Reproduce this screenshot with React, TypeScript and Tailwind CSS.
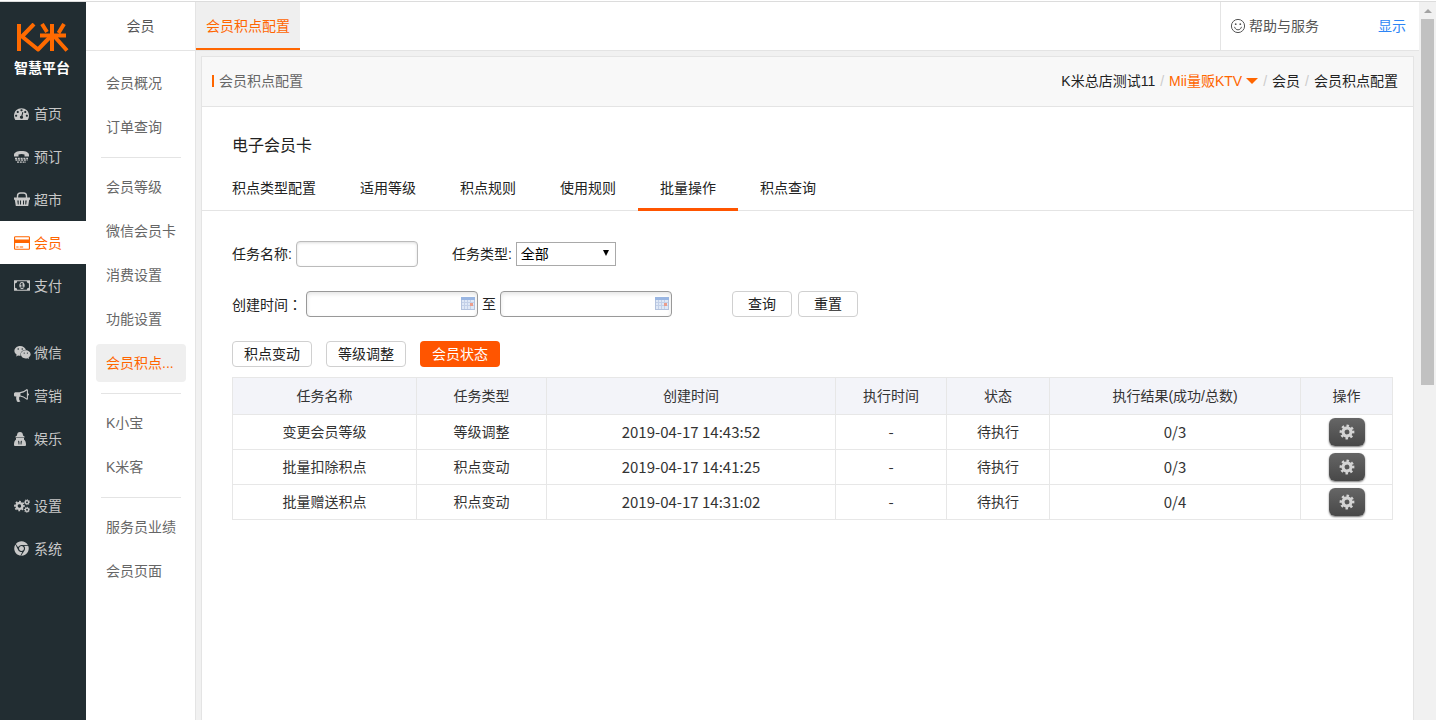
import { useState } from 'react';
import { FaWeixin, FaChrome } from 'react-icons/fa';

function DashboardIcon() {
  return (
    <svg viewBox="0 0 1792 1792" className="w-[15px] h-[15px]" fill="currentColor">
      <path d="M384 1152q0-53-37.5-90.5t-90.5-37.5-90.5 37.5-37.5 90.5 37.5 90.5 90.5 37.5 90.5-37.5 37.5-90.5zm192-448q0-53-37.5-90.5t-90.5-37.5-90.5 37.5-37.5 90.5 37.5 90.5 90.5 37.5 90.5-37.5 37.5-90.5zm428 481l101-382q6-26-7.5-48.5t-38.5-29.5-48 6.5-30 39.5l-101 382q-60 5-107 43.5t-63 98.5q-20 77 20 146t117 89 146-20 89-117q16-60-6-117t-72-91zm660-33q0-53-37.5-90.5t-90.5-37.5-90.5 37.5-37.5 90.5 37.5 90.5 90.5 37.5 90.5-37.5 37.5-90.5zm-640-640q0-53-37.5-90.5t-90.5-37.5-90.5 37.5-37.5 90.5 37.5 90.5 90.5 37.5 90.5-37.5 37.5-90.5zm448 192q0-53-37.5-90.5t-90.5-37.5-90.5 37.5-37.5 90.5 37.5 90.5 90.5 37.5 90.5-37.5 37.5-90.5zm320 448q0 261-141 483-19 29-54 29h-1402q-35 0-54-29-141-221-141-483 0-182 71-348t191-286 286-191 348-71 348 71 286 191 191 286 71 348z" />
    </svg>
  );
}

function PhoneIcon() {
  return (
    <svg viewBox="0 0 15 12" className="w-[15px] h-3" fill="currentColor">
      <path d="M0 5.500V4C0 1.500 3 0 7.500 0S15 1.500 15 4v1.500h-4.500V3.600c-1.800-.7-4.200-.7-6 0v1.900z" />
      <path d="M1 7.500h13M1.500 9.200h12M3 11.200h9" stroke="currentColor" strokeWidth="1.300" strokeDasharray="2 0.800" />
    </svg>
  );
}

function BasketIcon() {
  return (
    <svg viewBox="0 0 16 15" className="w-4 h-[15px]" fill="currentColor">
      <path d="M3.500 6V4Q3.500 1 6.500 1h3q3 0 3 3v2" fill="none" stroke="currentColor" strokeWidth="1.400" />
      <path
        fillRule="evenodd"
        d="M0 5.500h16v2.200h-.8L14.200 14H1.800L.8 7.700H0zM3.300 8.500l.5 4h.9v-4zM6 8.500v4h1v-4zM9 8.500v4h1v-4zM11.300 8.500v4h.9l.5-4z"
      />
    </svg>
  );
}

function CardIcon() {
  return (
    <svg viewBox="0 0 1792 1792" className="w-4 h-4" fill="currentColor">
      <path d="M1632 128q66 0 113 47t47 113v1216q0 66-47 113t-113 47h-1472q-66 0-113-47t-47-113v-1216q0-66 47-113t113-47h1472zm-1472 128q-13 0-22.5 9.5t-9.5 22.5v224h1536v-224q0-13-9.5-22.5t-22.5-9.5h-1472zm1472 1280q13 0 22.5-9.5t9.5-22.5v-608h-1536v608q0 13 9.5 22.5t22.5 9.5h1472zm-1376-128v-128h256v128h-256zm384 0v-128h384v128h-384z" />
    </svg>
  );
}

function MoneyIcon() {
  return (
    <svg viewBox="0 0 1920 1792" className="w-4 h-[15px]" fill="currentColor">
      <path d="M768 1152h384v-96h-128v-448h-114l-148 137 77 80q42-37 55-57h2v288h-128v96zm512-256q0 70-21 142t-59.5 134-101.5 101-138 39-138-39-101.5-101-59.5-134-21-142 21-142 59.5-134 101.5-101 138-39 138 39 101.5 101 59.5 134 21 142zm512 256v-512q-106 0-181-75t-75-181h-1152q0 106-75 181t-181 75v512q106 0 181 75t75 181h1152q0-106 75-181t181-75zm128-832v1152q0 26-19 45t-45 19h-1792q-26 0-45-19t-19-45v-1152q0-26 19-45t45-19h1792q26 0 45 19t19 45z" />
    </svg>
  );
}

function BullhornIcon() {
  return (
    <svg viewBox="0 0 1792 1792" className="w-[15px] h-[15px]" fill="currentColor">
      <path d="M1664 640q53 0 90.5 37.5t37.5 90.5-37.5 90.5-90.5 37.5v384q0 52-38 90t-90 38q-417-347-812-380-58 19-91 66t-31 100.5 40 92.5q-20 33-23 65.5t6 58 33.5 55 48 50 61.5 50.5q-29 58-111.5 83t-168.5 11.5-132-55.5q-7-23-29.5-87.5t-32-94.5-23-89-15-101 3.5-98.5 22-110.5h-122q-66 0-113-47t-47-113v-192q0-66 47-113t113-47h480q435 0 896-384 52 0 90 38t38 90v384zm-128 604v-954q-394 302-768 343v270q377 42 768 341z" />
    </svg>
  );
}

function AgentIcon() {
  return (
    <svg viewBox="0 0 12 14" className="w-3 h-[14px]" fill="currentColor">
      <path d="M3 3.500C3 1 4.200 0 6 0s3 1 3 3.500l1.500 1v1h-9v-1z" />
      <path
        fillRule="evenodd"
        d="M2 6h8v1.500c1.400 1 2 2.800 2 5V13q0 1-1 1H1q-1 0-1-1v-.5c0-2.200.6-4 2-5zM4 8.500l.6 4h.8v-3zM8 8.500l-1.400 1v3h.8z"
      />
    </svg>
  );
}

// Eight teeth: the dash length is 1/16 of the outer circle
function Gear({ cx, cy, scale }: { cx: number; cy: number; scale: number }) {
  return (
    <g
      transform={`translate(${cx} ${cy}) scale(${scale}) rotate(-11.25)`}
      fill="none"
      stroke="currentColor"
    >
      <circle r="4" strokeWidth="3.200" />
      <circle r="6.200" strokeWidth="2.400" strokeDasharray="2.435 2.435" />
    </g>
  );
}

function CogIcon() {
  return (
    <svg viewBox="0 0 16 16" className="w-4 h-4">
      <Gear cx={8} cy={8} scale={1} />
    </svg>
  );
}

function CogsIcon() {
  return (
    <svg viewBox="0 0 16 14" className="w-4 h-[14px]">
      <Gear cx={5.4} cy={7} scale={0.72} />
      <Gear cx={13} cy={3.2} scale={0.4} />
      <Gear cx={13} cy={10.8} scale={0.4} />
    </svg>
  );
}

function SmileIcon() {
  return (
    <svg viewBox="0 0 16 16" className="w-4 h-4" fill="none" stroke="currentColor">
      <circle cx="8" cy="8" r="6.6" />
      <path d="M4.6 9.2c.5 1.7 1.8 2.6 3.4 2.6s2.900-.9 3.400-2.600" strokeLinecap="round" />
      <circle cx="5.700" cy="6.200" r="0.900" fill="currentColor" stroke="none" />
      <circle cx="10.300" cy="6.200" r="0.900" fill="currentColor" stroke="none" />
    </svg>
  );
}

function CalendarIcon() {
  return (
    <svg viewBox="0 0 14 13" className="w-[14px] h-[13px]">
      <rect x="0.500" y="0.500" width="13" height="12" fill="#dfe8f6" stroke="#b4c3de" />
      <rect x="0" y="0" width="14" height="3" fill="#9ab6e2" />
      <path d="M1 5.500h12M1 8.500h12M3.500 3v9M6.500 3v9M9.500 3v9" stroke="#c3d0e8" />
      <rect x="9" y="6" width="3" height="3" fill="#eb9d8b" />
    </svg>
  );
}

function Logo() {
  return (
    <a href="#" className="flex flex-col items-center pt-[21px] pr-[2px] h-[90px]" aria-label="K米智慧平台">
      <svg
        viewBox="0 0 54 30"
        className="w-[54px] h-[30px]"
        fill="none"
        stroke="#ff6a00"
        strokeWidth="4"
      >
        <path d="M4 1v27" />
        <path d="M19 1L7 13.500l16 13L36 13" strokeLinejoin="round" />
        <path d="M25 12.500h26M37 1v27M27 1l5 8M49 1l-5.500 9M39 13l13 14.500" />
      </svg>
      <span className="mt-[7px] text-sm leading-4 font-bold text-white">智慧平台</span>
    </a>
  );
}

const mainMenu = [
  [
    { label: '首页', icon: <DashboardIcon /> },
    { label: '预订', icon: <PhoneIcon /> },
    { label: '超市', icon: <BasketIcon /> },
    { label: '会员', icon: <CardIcon />, active: true },
    { label: '支付', icon: <MoneyIcon /> },
  ],
  [
    { label: '微信', icon: <FaWeixin size={17} /> },
    { label: '营销', icon: <BullhornIcon /> },
    { label: '娱乐', icon: <AgentIcon /> },
  ],
  [
    { label: '设置', icon: <CogsIcon /> },
    { label: '系统', icon: <FaChrome size={15} /> },
  ],
];

const subMenu = [
  ['会员概况', '订单查询'],
  ['会员等级', '微信会员卡', '消费设置', '功能设置', '会员积点...'],
  ['K小宝', 'K米客'],
  ['服务员业绩', '会员页面'],
];

const tabs = ['积点类型配置', '适用等级', '积点规则', '使用规则', '批量操作', '积点查询'];

const rows = [
  { name: '变更会员等级', type: '等级调整', created: '2019-04-17 14:43:52', result: '0/3' },
  { name: '批量扣除积点', type: '积点变动', created: '2019-04-17 14:41:25', result: '0/3' },
  { name: '批量赠送积点', type: '积点变动', created: '2019-04-17 14:31:02', result: '0/4' },
];

const columns = [
  { title: '任务名称', width: 'w-[184px]' },
  { title: '任务类型', width: 'w-[130px]' },
  { title: '创建时间', width: '' },
  { title: '执行时间', width: 'w-[111px]' },
  { title: '状态', width: 'w-[103px]' },
  { title: '执行结果(成功/总数)', width: 'w-[251px]' },
  { title: '操作', width: 'w-[92px]' },
];

const buttonStyle = 'h-[26px] rounded border border-[#d0d0d0] bg-white text-[#222]';
const cellStyle = 'border border-[#e7e7e7] p-0 font-normal';
const numberStyle = "font-['Noto_Sans_CJK_SC',sans-serif] text-[15px] leading-5";

function DateInput({ label }: { label: string }) {
  return (
    <div className="relative">
      <input
        type="text"
        aria-label={label}
        className="block w-[172px] h-[26px] pl-2 pr-6 rounded border border-[#999] shadow-[inset_0_2px_4px_#e4e4e4]"
      />
      <span className="absolute right-[3px] top-[6px]">
        <CalendarIcon />
      </span>
    </div>
  );
}

export default function App() {
  const [activeTab, setActiveTab] = useState('批量操作');

  return (
    <div className="h-screen flex flex-col overflow-hidden bg-white pt-px text-sm text-[#222] font-['Liberation_Sans','Noto_Sans_CJK_SC',sans-serif]">
      <div className="h-px shrink-0 bg-[#dcdcdc]" />
      <div className="flex flex-1 min-h-0">
        {/* Main menu */}
        <aside className="w-[86px] shrink-0 bg-[#222d32] text-[#c8c8c8]">
          <Logo />
          <nav className="flex flex-col gap-6">
            {mainMenu.map((group, i) => (
              <div key={i}>
                {group.map((item) => (
                  <a
                    key={item.label}
                    href="#"
                    className={`flex items-center h-[43px] pl-[14px] ${
                      item.active ? 'bg-white text-[#ff6600]' : ''
                    }`}
                  >
                    <span className="w-5">{item.icon}</span>
                    {item.label}
                  </a>
                ))}
              </div>
            ))}
          </nav>
        </aside>

        <div className="flex flex-col flex-1 min-w-0">
          {/* Top bar */}
          <header className="flex shrink-0 h-[49px] border-b border-[#e4e4e4]">
            <div className="flex items-center justify-center w-[110px] border-r border-[#e4e4e4] text-[#555]">
              会员
            </div>
            <a
              href="#"
              className="flex items-center h-12 px-[10px] pt-[2px] bg-[#efefef] border-b-2 border-[#ff6600] text-[#ff6600]"
            >
              会员积点配置
            </a>
            <div className="flex items-center justify-between ml-auto w-[199px] pl-[9px] pr-[13px] border-l border-[#e4e4e4]">
              <a href="#" className="flex items-center gap-[3px] text-[#555]">
                <SmileIcon />
                帮助与服务
              </a>
              <a href="#" className="text-[#2d85f5]">
                显示
              </a>
            </div>
          </header>

          <div className="flex flex-1 min-h-0">
            {/* Sub menu */}
            <nav className="flex flex-col w-[110px] shrink-0 gap-[6px] pl-[10px] pr-[9px] pt-[13px] border-r border-[#e4e4e4] text-[#666]">
              {subMenu.map((group, i) => (
                <div key={i} className="flex flex-col gap-[6px]">
                  {i > 0 && <hr className="mx-[5px] mt-[5px] mb-1 border-[#e4e4e4]" />}
                  {group.map((label) => (
                    <a
                      key={label}
                      href="#"
                      className={`block h-[38px] pl-[10px] leading-[38px] rounded-sm whitespace-nowrap ${
                        label === '会员积点...' ? 'bg-[#efefef] text-[#ff6600]' : ''
                      }`}
                    >
                      {label}
                    </a>
                  ))}
                </div>
              ))}
            </nav>

            {/* Page */}
            <main className="flex flex-1 min-w-0 bg-[#f1f1f1] pt-[5px] px-[5px]">
              <section className="flex-1 min-w-0 bg-white border border-b-0 border-[#e4e4e4]">
                <div className="flex items-center justify-between h-[50px] px-[10px] pb-[2px] border-b border-[#e4e4e4] bg-[#f8f8f8]">
                  <h1 className="flex items-center gap-[5px] text-[#666]">
                    <span className="w-[2px] h-3 bg-[#ff6600]" />
                    会员积点配置
                  </h1>
                  <div className="flex items-center gap-[5px] pr-[5px]">
                    <a href="#">K米总店测试11</a>
                    <span className="text-[#ccc]">/</span>
                    <a href="#" className="flex items-center gap-1 text-[#ff6600]">
                      Mii量贩KTV
                      <svg viewBox="0 0 12 6" className="w-3 h-[6px]" fill="currentColor">
                        <path d="M0 0h12L6 6z" />
                      </svg>
                    </a>
                    <span className="text-[#ccc]">/</span>
                    <a href="#">会员</a>
                    <span className="text-[#ccc]">/</span>
                    <span>会员积点配置</span>
                  </div>
                </div>

                <h2 className="px-[30px] pt-[27px] text-base leading-6">电子会员卡</h2>
                <div className="flex mt-[9px] pl-2 border-b border-[#e4e4e4]">
                  {tabs.map((tab) => (
                    <button
                      key={tab}
                      type="button"
                      onClick={() => setActiveTab(tab)}
                      className={`h-11 -mb-px pt-px px-[22px] border-b-3 ${
                        tab === activeTab ? 'border-[#ff5500]' : 'border-transparent'
                      }`}
                    >
                      {tab}
                    </button>
                  ))}
                </div>

                <form className="px-[30px] pt-[30px]">
                  <div className="flex items-center">
                    <label htmlFor="taskName" className="mr-1">
                      任务名称:
                    </label>
                    <input
                      id="taskName"
                      type="text"
                      className="w-[122px] h-[26px] px-2 rounded border border-[#bbb] shadow-[inset_0_1px_3px_#ddd]"
                    />
                    <label htmlFor="taskType" className="ml-[34px] mr-1">
                      任务类型:
                    </label>
                    <div className="relative">
                      <select
                        id="taskType"
                        className="block appearance-none w-[100px] h-6 pl-1 border border-[#a9a9a9] bg-white text-black leading-5"
                      >
                        <option>全部</option>
                      </select>
                      <svg
                        viewBox="0 0 6 6"
                        className="absolute right-[7px] top-2 w-[6px] h-[6px] pointer-events-none"
                      >
                        <path d="M0 0h6L3 6z" />
                      </svg>
                    </div>
                  </div>

                  <div className="flex items-center mt-6">
                    <span className="w-[74px] font-['Noto_Sans_CJK_TC',sans-serif]" lang="zh-Hant">
                      <span className="font-['Noto_Sans_CJK_SC',sans-serif]" lang="zh-Hans">
                        创建时间
                      </span>
                      ：
                    </span>
                    <DateInput label="开始时间" />
                    <span className="mx-1">至</span>
                    <DateInput label="结束时间" />
                    <div className="flex gap-[6px] ml-[60px]">
                      <button type="button" className={`${buttonStyle} w-[60px]`}>
                        查询
                      </button>
                      <button type="reset" className={`${buttonStyle} w-[60px]`}>
                        重置
                      </button>
                    </div>
                  </div>

                  <div className="flex gap-[14px] mt-6">
                    <button type="button" className={`${buttonStyle} w-20`}>
                      积点变动
                    </button>
                    <button type="button" className={`${buttonStyle} w-20`}>
                      等级调整
                    </button>
                    <button type="button" className="w-20 h-[26px] rounded bg-[#ff5500] text-white">
                      会员状态
                    </button>
                  </div>
                </form>

                <div className="pl-[30px] pr-5 pt-[10px]">
                  <table className="w-full table-fixed border-collapse text-center text-[#333]">
                    <thead>
                      <tr className="h-[37px] bg-[#f3f4f9]">
                        {columns.map((col) => (
                          <th key={col.title} className={`${cellStyle} ${col.width}`}>
                            {col.title}
                          </th>
                        ))}
                      </tr>
                    </thead>
                    <tbody>
                      {rows.map((row) => (
                        <tr key={row.name} className="h-[35px]">
                          <td className={cellStyle}>{row.name}</td>
                          <td className={cellStyle}>{row.type}</td>
                          <td className={`${cellStyle} ${numberStyle}`}>{row.created}</td>
                          <td className={`${cellStyle} ${numberStyle}`}>-</td>
                          <td className={cellStyle}>待执行</td>
                          <td className={`${cellStyle} ${numberStyle}`}>{row.result}</td>
                          <td className={cellStyle}>
                            <button
                              type="button"
                              aria-label="操作"
                              className="flex items-center justify-center mx-auto w-9 h-7 rounded-md bg-linear-to-b from-[#666] to-[#484848] text-[#d4d4d4] shadow-[0_1px_2px_#777]"
                            >
                              <CogIcon />
                            </button>
                          </td>
                        </tr>
                      ))}
                    </tbody>
                  </table>
                </div>
              </section>
            </main>
          </div>
        </div>

        {/* Scrollbar */}
        <div className="flex flex-col items-center w-[17px] shrink-0 bg-[#f1f1f1]">
          <svg viewBox="0 0 17 17" className="w-[17px] h-[17px]" fill="#a3a3a3">
            <path d="M5 11h8L9 7z" />
          </svg>
          <div className="w-[13px] h-[51%] bg-[#c1c1c1]" />
        </div>
      </div>
    </div>
  );
}
